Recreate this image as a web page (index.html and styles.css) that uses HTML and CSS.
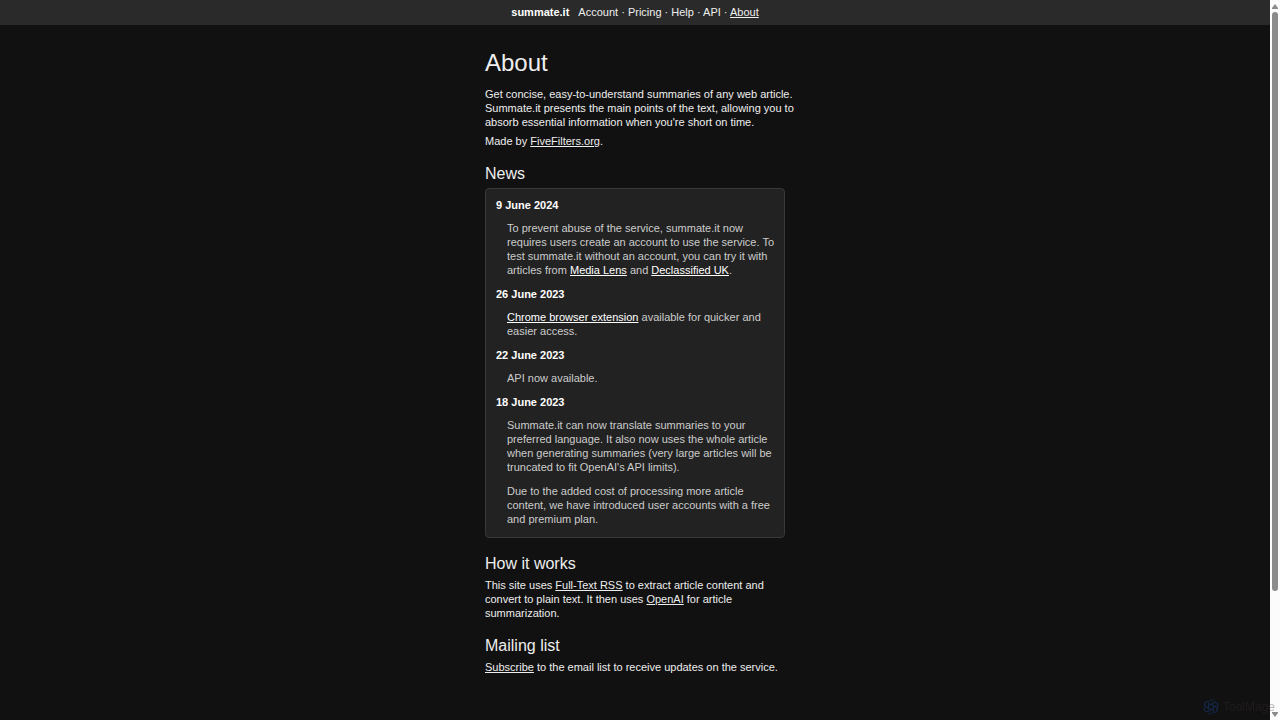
FILE: index.html
```html
<!DOCTYPE html>
<html lang="en">
	<head>
		<meta charset="UTF-8">
		<meta name="viewport" content="width=device-width, initial-scale=1">
		<title>About - summate.it</title>
		<link rel="stylesheet" href="styles.css">
	</head>
	<body>
		<div class="page">
			<header class="topbar">
				<a class="brand" href="#">summate.it</a>
				<nav>
					<a href="#">Account</a> · <a href="#">Pricing</a> · <a href="#">Help</a> · <a href="#">API</a> · <a class="current" href="#">About</a>
				</nav>
			</header>
			<main>
				<h1>About</h1>
				<p>Get concise, easy-to-understand summaries of any web article. Summate.it presents the main points of the text, allowing you to absorb essential information when you're short on time.</p>
				<p>Made by <a href="#">FiveFilters.org</a>.</p>

				<h2>News</h2>
				<dl class="news">
					<dt>9 June 2024</dt>
					<dd>
						<p>To prevent abuse of the service, summate.it now requires users create an account to use the service. To test summate.it without an account, you can try it with articles from <a href="#">Media Lens</a> and <a href="#">Declassified UK</a>.</p>
					</dd>
					<dt>26 June 2023</dt>
					<dd>
						<p><a href="#">Chrome browser extension</a> available for quicker and easier access.</p>
					</dd>
					<dt>22 June 2023</dt>
					<dd>
						<p>API now available.</p>
					</dd>
					<dt>18 June 2023</dt>
					<dd>
						<p>Summate.it can now translate summaries to your preferred language. It also now uses the whole article when generating summaries (very large articles will be truncated to fit OpenAI's API limits).</p>
						<p>Due to the added cost of processing more article content, we have introduced user accounts with a free and premium plan.</p>
					</dd>
				</dl>

				<h2>How it works</h2>
				<p>This site uses <a href="#">Full-Text RSS</a> to extract article content and convert to plain text. It then uses <a href="#">OpenAI</a> for article summarization.</p>

				<h2>Mailing list</h2>
				<p><a href="#">Subscribe</a> to the email list to receive updates on the service.</p>
			</main>
		</div>
		<div class="scrollbar" aria-hidden="true">
			<svg width="6" height="5" viewBox="0 0 6 5"><path d="M3 0 L6 4 V5 H0 V4 Z"/></svg>
			<div class="track"><div class="thumb"></div></div>
			<svg width="6" height="5" viewBox="0 0 6 5"><path d="M3 5 L6 1 V0 H0 V1 Z"/></svg>
		</div>
		<div class="badge">
			<svg width="16" height="16" viewBox="0 0 16 16">
				<path id="petal" d="M5.6 9.4 V3.9 C5.6 .4 9.6 -.2 11 2.3"/>
				<use href="#petal" transform="rotate(60 8 8)"/>
				<use href="#petal" transform="rotate(120 8 8)"/>
				<use href="#petal" transform="rotate(180 8 8)"/>
				<use href="#petal" transform="rotate(240 8 8)"/>
				<use href="#petal" transform="rotate(300 8 8)"/>
			</svg>
			<span>ToolMage</span>
		</div>
	</body>
</html>
```
FILE: styles.css
```css
html, body{
	margin: 0;
	background-color: #111;
}
body{
	display: flex;
	min-height: 100vh;
	font-family: Arial, "Liberation Sans", sans-serif;
	font-size: 11px;
	line-height: 14px;
	color: #eee;
}
a{
	color: inherit;
	text-underline-offset: 1px;
}
.page{
	flex: 1;
}

.topbar{
	display: flex;
	justify-content: center;
	gap: 9px;
	padding: 5px 0 6px;
	background-color: #2a2a2a;
}
.topbar a{
	text-decoration: none;
}
.topbar .brand{
	font-weight: bold;
	color: #fff;
}
.topbar .current{
	text-decoration: underline;
}

main{
	max-width: 300px;
	margin: 0 auto;
	padding-top: 24px;
}
h1, h2{
	font-weight: normal;
}
h1{
	margin: 0 0 10px;
	font-size: 24px;
	line-height: 28px;
}
h2{
	margin: 16px 0 4px;
	font-size: 16px;
	line-height: 20px;
}
p{
	margin: 0 -10px 5px 0;
}

.news{
	margin: 0;
	padding: 9px 10px 11px;
	border: 1px solid #383838;
	border-radius: 4px;
	background-color: #222;
}
.news dt{
	font-weight: bold;
	color: #fff;
}
.news dd{
	margin: 9px 6px 10px 11px;
	color: #ccc;
}
.news dd:last-child{
	margin-bottom: 0;
}
.news dd p{
	margin-bottom: 10px;
}
.news dd p:last-child{
	margin-bottom: 0;
}
.news a{
	color: #fff;
}

.scrollbar{
	position: sticky;
	top: 0;
	display: flex;
	flex-direction: column;
	align-items: center;
	gap: 3px;
	box-sizing: border-box;
	width: 10px;
	height: 100vh;
	padding: 4px 0 3px;
	background-color: #fcfcfc;
}
.scrollbar svg{
	fill: #8b8b8b;
}
.track{
	flex: 1;
	width: 6px;
}
.thumb{
	height: 83%;
	border-radius: 3px;
	background-color: #8b8b8b;
}

.badge{
	position: fixed;
	right: 5px;
	bottom: 5px;
	display: flex;
	align-items: center;
	gap: 4px;
	font-size: 12px;
	color: rgba(60,50,48,0.35);
}
.badge svg{
	fill: none;
	stroke: #152b52;
}
```
